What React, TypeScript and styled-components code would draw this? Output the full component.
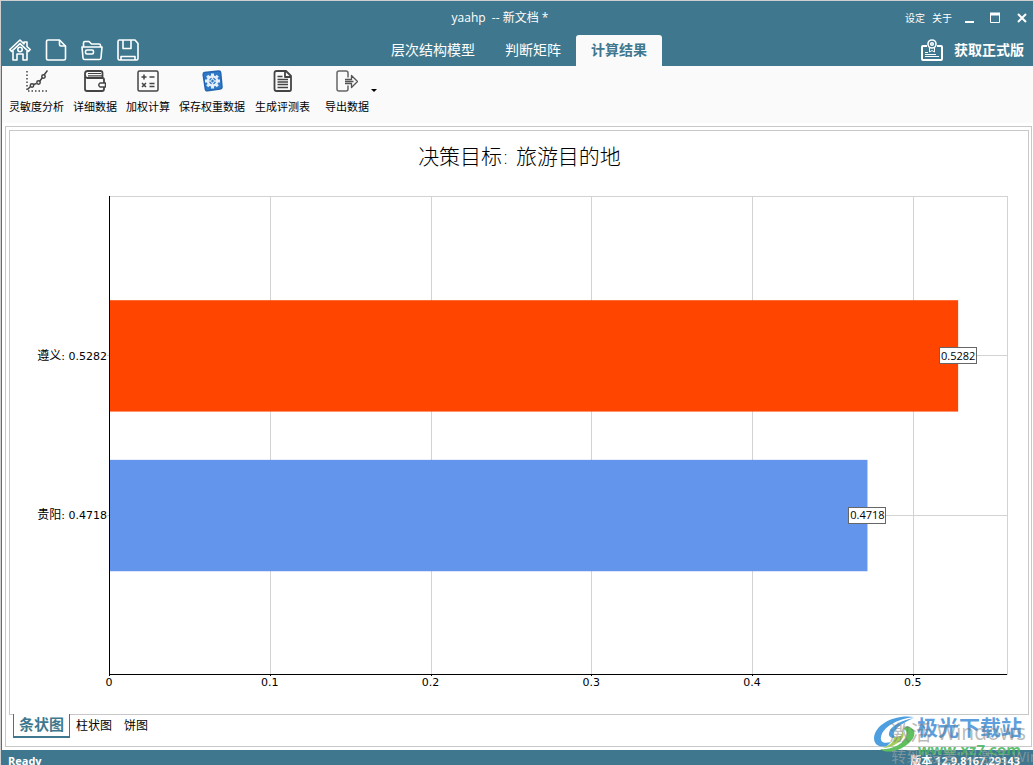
import React from "react";
import styled, { createGlobalStyle, css } from "styled-components";

const TEAL = "#3f788e";
const LINE = "#c8c8c8";

const Global = createGlobalStyle`
  * { box-sizing: border-box; }
  body {
    margin: 0;
    overflow: hidden;
    background: #fff;
    color: #000;
    font: 12px/16px "Open Sans", "Noto Sans CJK SC", sans-serif;
  }
  button { font: inherit; color: inherit; background: none; border: 0; padding: 0; margin: 0; white-space: nowrap; }
  a { color: inherit; text-decoration: none; white-space: nowrap; }
  svg { display: block; flex: none; }
`;

const Window = styled.div`
  position: relative;
  display: flex;
  flex-direction: column;
  height: 100vh;
  min-height: 480px;
  border-top: 1px solid #d0d0d0;
  border-left: 1px solid #d0d0d0;
  box-shadow: inset 1px 0 0 ${TEAL};
`;

const Header = styled.header`
  flex: none;
  background: ${TEAL};
  color: #fff;
`;

const SideGrid = styled.div<{ $height: number; $end?: boolean }>`
  display: grid;
  grid-template-columns: 1fr auto 1fr;
  align-items: ${(p) => (p.$end ? "end" : "center")};
  height: ${(p) => p.$height}px;
  padding: 0 6px;
`;

const Title = styled.h1`
  grid-column: 2;
  margin: 0 34px 0 0;
  font-size: 12px;
  font-weight: 400;
  white-space: pre;
`;

const WindowActions = styled.div`
  display: flex;
  justify-content: flex-end;
  align-items: center;
  gap: 7px;
  font-size: 10px;
`;

const Glyphs = styled.div`
  display: flex;
  gap: 14px;
  margin-left: 4px;
`;

const FileActions = styled.div`
  display: flex;
  gap: 14px;
  padding: 0 0 5px 2px;
`;

const MainTabs = styled.nav`
  display: flex;
  margin-left: 4px;
`;

const MainTab = styled.button<{ $active?: boolean }>`
  height: 31px;
  padding: 0 15px 2px;
  font-size: 14px;
  line-height: 28px;
  ${(p) =>
    p.$active &&
    css`
      background: #fafafa;
      color: ${TEAL};
      font-weight: 700;
      border-radius: 3px 3px 0 0;
    `}
`;

const GetLicense = styled.a`
  justify-self: end;
  display: flex;
  align-items: center;
  gap: 11px;
  padding: 0 3px 5px 0;
  font-size: 14px;
  line-height: 22px;
  font-weight: 700;
`;

const Toolbar = styled.div`
  flex: none;
  display: flex;
  gap: 9px;
  height: 57px;
  margin-left: 1px;
  padding: 4px 7px 0;
  background: #fafafa;
`;

const ToolButton = styled.button<{ $gap?: number }>`
  display: flex;
  flex-direction: column;
  align-items: center;
  gap: 7px;
  margin-left: ${(p) => p.$gap ?? 0}px;
  font-size: 11px;
  line-height: 16px;
`;

const Caret = styled.button`
  align-self: flex-start;
  margin: 19px 0 0 -7px;
  border: 3px solid transparent;
  border-top-color: #000;
`;

const Frame = styled.main`
  flex: 1;
  display: flex;
  flex-direction: column;
  min-height: 0;
  margin: 3px 1px 3px 4px;
  padding: 3px 2px 7px 3px;
  border: 1px solid ${LINE};
`;

const ChartPanel = styled.section`
  flex: 1;
  display: flex;
  flex-direction: column;
  min-height: 0;
  border: 1px solid ${LINE};
  padding: 12px 21px 40px 99px;
`;

const ChartTitle = styled.h2`
  margin: 0 77px 25px 0;
  font-family: "DejaVu Sans", "Noto Sans CJK SC", sans-serif;
  font-size: 21px;
  line-height: 28px;
  font-weight: 300;
  text-align: center;
  white-space: pre;
`;

const Plot = styled.svg`
  flex: 1;
  width: 100%;
  min-height: 0;
  overflow: visible;
  font: 11px "DejaVu Sans", "Noto Sans CJK SC", sans-serif;
`;

const ChartTabs = styled.nav`
  flex: none;
  display: flex;
  height: 24px;
  padding-left: 4px;
`;

const ChartTab = styled.button<{ $active?: boolean }>`
  height: 22px;
  padding: 0 6px;
  font-size: 12px;
  line-height: 22px;
  ${(p) =>
    p.$active &&
    css`
      height: 24px;
      margin-top: -1px;
      padding: 0 5px;
      background: #fff;
      border: solid ${TEAL};
      border-width: 0 1px 2px;
      color: ${TEAL};
      font-size: 15px;
      line-height: 20px;
      padding-bottom: 2px;
      font-weight: 700;
    `}
`;

const StatusBar = styled.footer`
  flex: none;
  display: flex;
  justify-content: space-between;
  height: 15px;
  overflow: hidden;
  padding: 0 13px 0 7px;
  background: ${TEAL};
  color: #fff;
  font-size: 11px;
  line-height: 22px;
  font-weight: 700;
`;

const Overlay = styled.div<{ $right: number; $bottom: number; $size: number; $color: string; $bold?: boolean }>`
  position: absolute;
  right: ${(p) => p.$right}px;
  bottom: ${(p) => p.$bottom}px;
  font-size: ${(p) => p.$size}px;
  line-height: 24px;
  color: ${(p) => p.$color};
  font-weight: ${(p) => (p.$bold ? 700 : 400)};
  white-space: nowrap;
  pointer-events: none;
`;

const Watermark = styled.div`
  position: absolute;
  right: 0;
  bottom: 0;
  width: 160px;
  height: 52px;
  overflow: hidden;
  pointer-events: none;
`;

const HeadIcon = ({ children }: { children: React.ReactNode }) => (
  <svg width="22" height="22" viewBox="0 0 22 22" fill="none" stroke="#fff" strokeWidth="1.6" strokeLinejoin="round">
    {children}
  </svg>
);

const ToolIcon = ({ children }: { children: React.ReactNode }) => (
  <svg width="22" height="22" viewBox="0 0 22 22" fill="none" stroke="#444" strokeWidth="1.5" strokeLinejoin="round">
    {children}
  </svg>
);

const files = [
  {
    label: "主页",
    art: (
      <>
        <path d="M4 12v9h4v-6h6v6h4v-9" />
        <path d="M11 1 .8 10.500 2.600 12.400 11 4.600l8.400 7.800 1.800-1.900-3.200-3V3h-3v2z" />
        <circle cx="11" cy="10.500" r="2.200" />
      </>
    ),
  },
  { label: "新建", art: <><path d="M3 1H14.500l6 6v12.500q0 1.500-1.500 1.500H3q-1.500 0-1.500-1.500v-17Q1.500 1 3 1" /><path d="M14.500 1v4.500q0 1.500 1.500 1.500h4.500" /></> },
  {
    label: "打开",
    art: (
      <>
        <path d="M2.500 8V4q0-1.500 1.500-1.500h4L10.500 5H18q1.500 0 1.500 1.500V8" />
        <path d="M1 8h20l-1 11q-.2 1.500-1.700 1.500H3.700Q2.200 20.500 2 19z" />
        <rect x="4.500" y="11" width="8" height="4" rx="1.500" />
      </>
    ),
  },
  { label: "保存", art: <><path d="M2.500 1H18l3 3.500v15q0 1.500-1.500 1.500h-17Q1 21 1 19.500v-17Q1 1 2.500 1" /><path d="M6 1v8.500h8V1M4 21v-3.500h14V21" /></> },
];

const teeth = [0, 45, 90, 135, 180, 225, 270, 315];

const tools = [
  {
    label: "灵敏度分析",
    gap: 0,
    art: (
      <>
        <path d="M1 1v20h20" strokeDasharray="1.500 2" />
        <path d="m1.500 19.500 3-3M7.500 14.500l3-1M13.500 11.500l3-4M18 5l3.500-4.500" />
        <circle cx="6" cy="15.500" r="1.700" /><circle cx="12.500" cy="12.500" r="1.700" /><circle cx="17.500" cy="6.500" r="1.700" />
      </>
    ),
  },
  {
    label: "详细数据",
    gap: 0,
    art: (
      <>
        <path d="M20 13V9.500q0-1.500-1.500-1.500H3Q1 7.500 1 4.500M18.500 8V3q0-2-2-2h-13Q1 1 1 3.500V19q0 2 2 2h15q2 0 2-2v-2" strokeWidth="1.800" />
        <path d="M4 3.500h13M4 5.800h14" strokeWidth="1.200" />
        <path d="M21.500 13H16q-2.500 2 0 4h5.500z" />
      </>
    ),
  },
  {
    label: "加权计算",
    gap: 0,
    art: (
      <>
        <rect x="1" y="1" width="20" height="20" rx="1.500" />
        <path d="M4.500 7h5M7 4.500v5M12.500 7h5M5 13l4 4M9 13l-4 4M12.500 13.500h5M12.500 16.500h5" />
      </>
    ),
  },
  {
    label: "保存权重数据",
    gap: 0,
    art: (
      <>
        <path d="m3.500 2.500 14-1.500q2-.2 2.200 1.800l1.300 14q.2 2-2 2.300l-12.500 1.700q-2 .2-2.200-1.800L2.200 5q-.2-2.200 1.300-2.500" fill="#2e78c8" stroke="#2466b0" />
        <g transform="translate(11.500 11)" stroke="none" fill="#e6eef7">
          {teeth.map((a) => <rect key={a} x="-1.500" y="-7.500" width="3" height="4" transform={`rotate(${a})`} />)}
        </g>
        <circle cx="11.500" cy="11" r="4.700" stroke="#e6eef7" strokeWidth="2.200" />
        <path d="M11.500 6v3M11.500 13v3M6.500 11h3M13.500 11h3" stroke="#e6eef7" />
        <circle cx="11.500" cy="11" r="1.800" stroke="#e6eef7" strokeWidth="1" />
      </>
    ),
  },
  {
    label: "生成评测表",
    gap: 1,
    art: (
      <>
        <path d="M4.500 1H14l5 5v13q0 2-1.500 2h-13Q2.500 21 2.500 19V3q0-2 2-2M13 1v6h6" strokeWidth="1.800" />
        <path d="M5.500 6.500h5M5.500 9.500H16M5.500 12H16M5.500 14.500H16M5.500 17.500H16" />
      </>
    ),
  },
  {
    label: "导出数据",
    gap: 6,
    art: (
      <>
        <path d="M12 7.500V3q0-2-2-2H3Q1 1 1 3v16q0 2 2 2h7q2 0 2-2v-3.500" stroke="#666" />
        <path d="M9 9.500h6.500V5.500l6 6-6 6v-4H9M9 11.500h8.500" stroke="#555" strokeWidth="1.300" />
      </>
    ),
  },
];

const AXIS_MAX = 0.5586;
const ticks = [0, 0.1, 0.2, 0.3, 0.4, 0.5];
const bars = [
  { name: "遵义", value: 0.5282, color: "#ff4500", at: 33.4 },
  { name: "贵阳", value: 0.4718, color: "#6495ed", at: 66.8 },
];
const pct = (v: number) => `${(v / AXIS_MAX) * 100}%`;

const BarChart = () => (
  <Plot role="img" aria-label="条状图">
    <rect width="100%" height="100%" fill="none" stroke="#d3d3d3" shapeRendering="crispEdges" />
    {ticks.map((t) => (
      <g key={t}>
        <svg x={pct(t)} height="100%" overflow="visible">
          <line x1=".5" x2=".5" y2="100%" stroke="#d3d3d3" shapeRendering="crispEdges" />
        </svg>
        <svg x={pct(t)} y="100%" overflow="visible">
          <text y="12" textAnchor="middle">{t}</text>
          <path d="M.5 0v2" stroke="#000" shapeRendering="crispEdges" />
        </svg>
      </g>
    ))}
    {bars.map((b) => (
      <g key={b.name}>
        <line x1="-2" x2="100%" y1={`${b.at}%`} y2={`${b.at}%`} stroke="#d3d3d3" shapeRendering="crispEdges" />
        <rect x="0" y={`${b.at - 11.6}%`} width={pct(b.value)} height="23.3%" fill={b.color} />
        <svg x="0" y={`${b.at}%`} overflow="visible">
          <text x="-2" y="4" textAnchor="end"><tspan fontSize="12">{b.name}</tspan>{`: ${b.value}`}</text>
        </svg>
        <svg x={pct(b.value)} y={`${b.at}%`} overflow="visible">
          <rect x="-19" y="-8" width="37" height="16" fill="#fff" stroke="#666" shapeRendering="crispEdges" />
          <text y="4" textAnchor="middle" fontFamily="Open Sans">{b.value}</text>
        </svg>
      </g>
    ))}
    <line x1="0" x2="0" y1="0" y2="100%" stroke="#000" shapeRendering="crispEdges" />
    <line x1="0" x2="100%" y1="100%" y2="100%" stroke="#000" shapeRendering="crispEdges" />
  </Plot>
);

export default function App() {
  return (
    <>
      <Global />
      <Window>
        <Header>
          <SideGrid $height={33}>
            <Title>yaahp  -- 新文档 *</Title>
            <WindowActions>
              <button>设定</button>
              <button>关于</button>
              <Glyphs>
                <button aria-label="最小化"><svg width="12" height="12"><path d="M2 10h9" stroke="#fff" strokeWidth="2" /></svg></button>
                <button aria-label="最大化"><svg width="12" height="12"><path d="M1.500 2v8.500h9V2" fill="none" stroke="#fff" /><path d="M1 2h10" stroke="#fff" strokeWidth="3" /></svg></button>
                <button aria-label="关闭"><svg width="12" height="12"><path d="m3 2 8 8M11 2l-8 8" stroke="#fff" strokeWidth="2" /></svg></button>
              </Glyphs>
            </WindowActions>
          </SideGrid>
          <SideGrid $height={32} $end>
            <FileActions>
              {files.map((f) => <button key={f.label} aria-label={f.label}><HeadIcon>{f.art}</HeadIcon></button>)}
            </FileActions>
            <MainTabs>
              <MainTab>层次结构模型</MainTab>
              <MainTab>判断矩阵</MainTab>
              <MainTab $active>计算结果</MainTab>
            </MainTabs>
            <GetLicense href="#">
              <HeadIcon>
                <path d="M6 7H2q-1 0-1 1v12q0 1 1 1h18q1 0 1-1V8q0-1-1-1h-4" strokeWidth="2" />
                <circle cx="11" cy="5" r="4" /><circle cx="11" cy="5" r="1.300" />
                <path d="M8.500 9v4l2.500-1.500 2.500 1.500V9M4 13.500h3M4 15.500h11M4 17.500h14" strokeWidth="1" />
              </HeadIcon>
              获取正式版
            </GetLicense>
          </SideGrid>
        </Header>
        <Toolbar>
          {tools.map((t) => (
            <ToolButton key={t.label} $gap={t.gap}><ToolIcon>{t.art}</ToolIcon>{t.label}</ToolButton>
          ))}
          <Caret aria-label="导出选项" />
        </Toolbar>
        <Frame>
          <ChartPanel>
            <ChartTitle>决策目标: 旅游目的地</ChartTitle>
            <BarChart />
          </ChartPanel>
          <ChartTabs>
            <ChartTab $active>条状图</ChartTab>
            <ChartTab>柱状图</ChartTab>
            <ChartTab>饼图</ChartTab>
          </ChartTabs>
        </Frame>
        <StatusBar>
          <span>Ready</span>
          <span>版本 12.9.8167.29143</span>
        </StatusBar>
        <Watermark>
          <svg width="46" height="44" viewBox="0 0 46 44">
            <path d="M41 4C22 1 2 11 1 25c0 7 6 10 13 8l4-4C11 31 7 29 8 24 10 14 24 6 41 4" fill="#4d9fdf" />
            <path d="M41 5C29 7 17 13 16 20c-1 5 5 6 9 4-3 0-5-1-4-4 2-6 10-11 20-15" fill="#4d9fdf" />
            <path d="M34 13c8 2 10 8 4 15C30 37 15 42 7 36c9 1 20-3 25-10 3-5 2-9-2-10z" fill="#5fc05d" />
            <path d="M21 24c5 1 9-2 8-6 4 3 1 9-6 13-5 3-9 4-14 4 7-2 12-6 12-11" fill="#a5cf5a" />
          </svg>
          <Overlay $right={11} $bottom={26} $size={21} $color="rgba(64,142,214,.85)" $bold>极光下载站</Overlay>
          <Overlay $right={12} $bottom={4} $size={15} $color="rgba(70,180,90,.85)" $bold>www.xz7.com</Overlay>
          <Overlay $right={7} $bottom={21} $size={21} $color="rgba(120,120,120,.5)">激活 Windows</Overlay>
          <Overlay $right={-43} $bottom={-3} $size={15} $color="rgba(170,170,170,.6)">转到"设置"以激活 Windows</Overlay>
        </Watermark>
      </Window>
    </>
  );
}
